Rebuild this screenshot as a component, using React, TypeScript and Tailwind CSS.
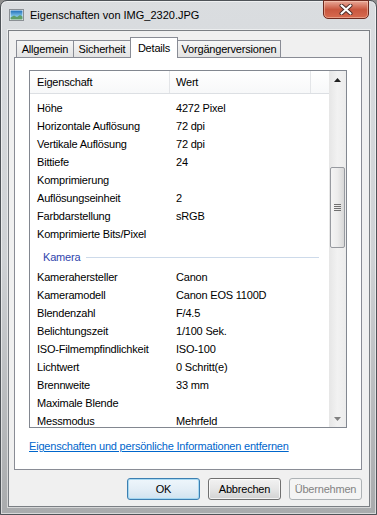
import React from 'react'

type Row = [string, string]

const FILE_ROWS: Row[] = [
  ['Höhe', '4272 Pixel'],
  ['Horizontale Auflösung', '72 dpi'],
  ['Vertikale Auflösung', '72 dpi'],
  ['Bittiefe', '24'],
  ['Komprimierung', ''],
  ['Auflösungseinheit', '2'],
  ['Farbdarstellung', 'sRGB'],
  ['Komprimierte Bits/Pixel', ''],
]

const CAMERA_ROWS: Row[] = [
  ['Kamerahersteller', 'Canon'],
  ['Kameramodell', 'Canon EOS 1100D'],
  ['Blendenzahl', 'F/4.5'],
  ['Belichtungszeit', '1/100 Sek.'],
  ['ISO-Filmempfindlichkeit', 'ISO-100'],
  ['Lichtwert', '0 Schritt(e)'],
  ['Brennweite', '33 mm'],
  ['Maximale Blende', ''],
  ['Messmodus', 'Mehrfeld'],
]

function PropRow({ row }: { row: Row }) {
  return (
    <div className="flex h-[18px] shrink-0 items-center whitespace-nowrap text-black">
      <div className="w-[140px] shrink-0 pl-[7px]">{row[0]}</div>
      <div className="pl-[6px]">{row[1]}</div>
    </div>
  )
}

function ImageIcon() {
  return (
    <svg width="15" height="12" viewBox="0 0 15 12" className="shrink-0">
      <defs>
        <linearGradient id="sky" x1="0" y1="0" x2="0" y2="1">
          <stop offset="0" stopColor="#1f6fb8" />
          <stop offset="0.6" stopColor="#7cc0e8" />
          <stop offset="1" stopColor="#d9eef7" />
        </linearGradient>
      </defs>
      <rect x="0.5" y="0.5" width="14" height="11" fill="#fff" stroke="#8a8f94" />
      <rect x="1.5" y="1.5" width="12" height="9" fill="url(#sky)" />
      <path d="M1.5 8.5 L5 6.5 L8 8 L11 6 L13.5 7.5 L13.5 10.5 L1.5 10.5 Z" fill="#5f9e6a" />
    </svg>
  )
}

function Tab({ label, w, active, cls }: { label: string; w: string; active?: boolean; cls: string }) {
  if (active) {
    return (
      <div className={`${w} ${cls} relative z-10 -mb-px flex h-[21px] items-start justify-center border-t border-[#898c95] bg-white pt-[2px]`}>
        {label}
      </div>
    )
  }
  return (
    <div className={`${w} ${cls} flex h-[17px] items-center justify-center border-t border-[#898c95] bg-gradient-to-b from-[#f6f6f6] to-[#e3e3e3]`}>
      {label}
    </div>
  )
}

export default function App() {
  return (
    <div className="h-[515px] w-[377px] overflow-hidden bg-[#8f8f8f] font-['Liberation_Sans',Arial,sans-serif] text-[11px] tracking-[-0.2px]">
      <div className="relative flex h-[515px] w-[377px] flex-col rounded-t-[7px] border border-[#4e5358] bg-gradient-to-b from-[#dadde0] via-[#cfd2d5] to-[#a9abad] shadow-[inset_0_0_0_1px_rgba(255,255,255,0.55)]">
        {/* title bar */}
        <div className="flex h-[29px] shrink-0 items-center gap-[6px] pl-[8px] pb-[1px]">
          <ImageIcon />
          <span className="tracking-normal text-black">Eigenschaften von IMG_2320.JPG</span>
        </div>
        <div className="absolute right-[7px] top-[-1px] flex h-[19px] w-[46px] items-center justify-center rounded-b-[5px] border border-[#6e2a1f] bg-gradient-to-b from-[#e8a898] via-[#c9573f] to-[#d76a4f] shadow-[inset_0_0_0_1px_rgba(255,220,200,0.45)]">
          <svg width="14" height="11" viewBox="0 0 14 11">
            <path d="M2.5 1.5 L11.5 9.5 M11.5 1.5 L2.5 9.5" stroke="#4a2a26" strokeWidth="4" strokeLinecap="round" />
            <path d="M2.5 1.5 L11.5 9.5 M11.5 1.5 L2.5 9.5" stroke="#ffffff" strokeWidth="2.2" strokeLinecap="round" />
          </svg>
        </div>

        {/* client area */}
        <div className="mb-[7px] ml-[7px] mr-[6px] flex flex-1 flex-col border border-[#7b7f84] bg-[#f0f0f0] shadow-[0_0_0_1px_rgba(255,255,255,0.5)]">
          <div className="mt-[6px] flex h-[20px] items-end pl-[7px] text-black">
            <Tab label="Allgemein" w="w-[57px]" cls="border-l" />
            <Tab label="Sicherheit" w="w-[57px]" cls="border-l" />
            <Tab label="Details" w="w-[48px]" cls="border-l border-r" active />
            <Tab label="Vorgängerversionen" w="w-[103px]" cls="border-r" />
          </div>

          {/* tab panel */}
          <div className="ml-[5px] flex h-[413px] w-[348px] flex-col border border-[#898c95] bg-white">
            <div className="ml-[14px] mt-[12px] flex h-[358px] w-[318px] border border-[#828790] bg-white">
              <div className="flex min-w-0 flex-1 flex-col overflow-hidden">
                <div className="flex h-[23px] shrink-0 items-center border-b border-[#dcdfe3] bg-gradient-to-b from-white to-[#f7f8f9] text-black">
                  <div className="flex h-full w-[140px] items-center border-r border-[#e3e5e8] pl-[7px]">Eigenschaft</div>
                  <div className="flex h-full w-[141px] items-center border-r border-[#e3e5e8] pl-[6px]">Wert</div>
                </div>
                <div className="h-[5px] shrink-0" />
                {FILE_ROWS.map(r => <PropRow key={r[0]} row={r} />)}
                <div className="flex h-[25px] shrink-0 items-center pl-[13px] pr-[10px] pt-[3px]">
                  <span className="text-[#2f45ad]">Kamera</span>
                  <div className="ml-[6px] h-px flex-1 bg-[#cddaea]" />
                </div>
                {CAMERA_ROWS.map(r => <PropRow key={r[0]} row={r} />)}
              </div>

              {/* scrollbar */}
              <div className="flex w-[17px] shrink-0 flex-col bg-gradient-to-r from-[#e6e6e6] via-[#f2f2f2] to-[#ececec]">
                <div className="flex h-[17px] shrink-0 items-center justify-center">
                  <svg width="7" height="4" viewBox="0 0 7 4"><path d="M3.5 0 L7 4 L0 4 Z" fill="#202020" /></svg>
                </div>
                <div className="mx-px mt-[79px] flex h-[81px] shrink-0 items-center justify-center rounded-[2px] border border-[#979aa0] bg-gradient-to-r from-[#f4f4f4] via-[#ececec] to-[#d8d8d8]">
                  <div className="flex w-[7px] flex-col gap-[1px]">
                    <div className="h-px bg-[#707070]" />
                    <div className="h-px bg-[#707070]" />
                    <div className="h-px bg-[#707070]" />
                    <div className="h-px bg-[#707070]" />
                  </div>
                </div>
                <div className="flex-1" />
                <div className="flex h-[17px] shrink-0 items-center justify-center">
                  <svg width="7" height="4" viewBox="0 0 7 4"><path d="M0 0 L7 0 L3.5 4 Z" fill="#808080" /></svg>
                </div>
              </div>
            </div>

            <div className="ml-[14px] mt-[11px] leading-[14px]">
              <span className="cursor-pointer text-[#0066cc] underline">Eigenschaften und persönliche Informationen entfernen</span>
            </div>
          </div>

          {/* buttons */}
          <div className="mt-[8px] flex gap-[8px] pl-[118px]">
            <button className="flex h-[22px] w-[73px] items-center justify-center rounded-[3px] border border-[#3c7fb1] bg-gradient-to-b from-[#eef6fb] via-[#e3eef6] to-[#cfe3f0] text-black shadow-[inset_0_0_0_1px_rgba(150,210,240,0.8)]">
              OK
            </button>
            <button className="flex h-[22px] w-[73px] items-center justify-center rounded-[3px] border border-[#707070] bg-gradient-to-b from-[#f2f2f2] via-[#e6e6e6] to-[#d2d2d2] text-black shadow-[inset_0_0_0_1px_rgba(255,255,255,0.7)]">
              Abbrechen
            </button>
            <button className="flex h-[22px] w-[73px] items-center justify-center rounded-[3px] border border-[#adb2b5] bg-[#f4f4f4] text-[#838383]">
              Übernehmen
            </button>
          </div>
        </div>
      </div>
    </div>
  )
}
